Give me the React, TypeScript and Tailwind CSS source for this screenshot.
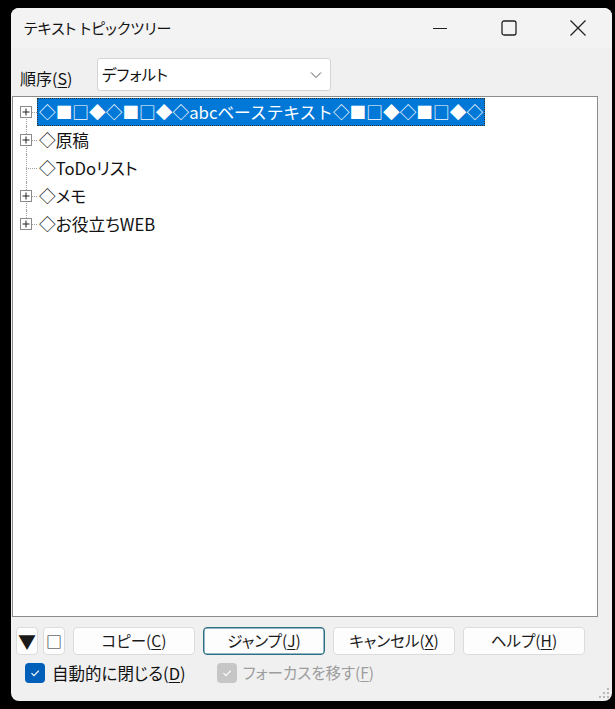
import React from "react";

const font = "font-['Noto_Sans_CJK_JP','Noto_Sans',sans-serif] [font-feature-settings:'palt']";

type Row = { text: string; box: boolean; selected?: boolean; first?: boolean; last?: boolean };

const rows: Row[] = [
  { text: "◇■□◆◇■□◆◇abcベーステキスト◇■□◆◇■□◆◇", box: true, selected: true, first: true },
  { text: "◇原稿", box: true },
  { text: "◇ToDoリスト", box: false },
  { text: "◇メモ", box: true },
  { text: "◇お役立ちWEB", box: true, last: true },
];

function TreeRow({ r }: { r: Row }) {
  return (
    <div className="flex items-center h-[28.1px]">
      <div className="relative w-[24px] h-full shrink-0">
        <div
          className={`absolute left-[13px] w-0 border-l border-dotted border-[#a0a0a0] ${
            r.first ? "top-1/2 bottom-0" : r.last ? "top-0 h-1/2" : "top-0 bottom-0"
          }`}
        />
        <div className="absolute left-[13px] top-1/2 w-[11px] h-0 border-t border-dotted border-[#a0a0a0]" />
        {r.box && (
          <div className="absolute left-[7px] top-[8px] w-[12px] h-[12px] bg-white border border-[#8a8a8a] flex items-center justify-center">
            <svg width="10" height="10" viewBox="0 0 10 10">
              <path d="M1.5 5h7M5 1.5v7" stroke="#222" strokeWidth="1" />
            </svg>
          </div>
        )}
      </div>
      <div
        className={`h-full flex items-center px-[2px] text-[16.7px] leading-none whitespace-nowrap ${
          r.selected
            ? "[font-feature-settings:normal] bg-[#0078d7] text-white outline outline-1 outline-dotted outline-[#333] -outline-offset-1"
            : "text-[#111]"
        }`}
      >
        {r.text}
      </div>
    </div>
  );
}

function Btn({ children, focused, className = "" }: { children: React.ReactNode; focused?: boolean; className?: string }) {
  return (
    <div
      className={`h-[28px] flex items-center justify-center rounded-[4px] bg-[#fdfdfd] text-[15.5px] text-[#1a1a1a] border ${
        focused ? "border-[#2d6f86] shadow-[inset_0_0_0_0.5px_#2d6f86]" : "border-[#dcdcdc]"
      } ${className}`}
    >
      {children}
    </div>
  );
}

function Check({ disabled }: { disabled?: boolean }) {
  return (
    <div
      className={`w-[20px] h-[20px] rounded-[4px] flex items-center justify-center ${
        disabled ? "bg-[#c6c6c6]" : "bg-[#005fb8]"
      }`}
    >
      <svg width="14" height="14" viewBox="0 0 14 14">
        <path d="M3.5 7.2l2.5 2.5 4.8-5" fill="none" stroke="white" strokeWidth="1.2" />
      </svg>
    </div>
  );
}

export default function App() {
  return (
    <div className={`w-[615px] h-[709px] bg-black pt-[8px] pl-[11px] ${font}`}>
      <div className="w-[601px] h-[693px] rounded-[8px] bg-[#f0f0f0] flex flex-col overflow-hidden">
        {/* title bar */}
        <div className="h-[40px] shrink-0 flex items-center bg-[#f3f3f3]">
          <div className="pl-[13px] flex-1 text-[15px] text-[#111]">テキスト トピックツリー</div>
          <div className="w-[69px] h-full flex items-center justify-center">
            <svg width="16" height="16" viewBox="0 0 16 16">
              <path d="M1 8.5h14" stroke="#222" strokeWidth="1" />
            </svg>
          </div>
          <div className="w-[69px] h-full flex items-center justify-center">
            <svg width="16" height="16" viewBox="0 0 16 16">
              <rect x="1" y="1" width="14" height="14" rx="2" fill="none" stroke="#222" strokeWidth="1.3" />
            </svg>
          </div>
          <div className="w-[69px] h-full flex items-center justify-center">
            <svg width="18" height="18" viewBox="0 0 18 18">
              <path d="M1.5 1.5l15 15M16.5 1.5l-15 15" stroke="#222" strokeWidth="1.3" />
            </svg>
          </div>
        </div>

        {/* order row */}
        <div className="flex items-center mt-[10px] h-[33px]">
          <div className="pl-[9px] w-[86px] text-[16px] text-[#111] pt-[6px]">
            順序(<span className="underline underline-offset-2">S</span>)
          </div>
          <div className="w-[234px] h-[33px] bg-white border border-[#d4d4d4] rounded-[3px] flex items-center pl-[4px] pr-[8px]">
            <span className="flex-1 text-[15.5px] text-[#111]">デフォルト</span>
            <svg width="12" height="8" viewBox="0 0 12 8">
              <path d="M1 1.5l5 5 5-5" fill="none" stroke="#555" strokeWidth="1" />
            </svg>
          </div>
        </div>

        {/* tree */}
        <div className="ml-[1px] mt-[5px] w-[586px] h-[521px] bg-white border border-[#8c8c8c] pt-[1px]">
          {rows.map((r, i) => (
            <TreeRow key={i} r={r} />
          ))}
        </div>

        {/* buttons */}
        <div className="flex items-center mt-[10px] ml-[5px]">
          <Btn className="w-[22px] text-[18px] mr-[5px]">▼</Btn>
          <Btn className="w-[22px] text-[16px] mr-[8px]">□</Btn>
          <Btn className="w-[122px] mr-[8px]">
            コピー(<span className="underline underline-offset-2">C</span>)
          </Btn>
          <Btn focused className="w-[122px] mr-[8px]">
            ジャンプ(<span className="underline underline-offset-2">J</span>)
          </Btn>
          <Btn className="w-[122px] mr-[8px]">
            キャンセル(<span className="underline underline-offset-2">X</span>)
          </Btn>
          <Btn className="w-[122px]">
            ヘルプ(<span className="underline underline-offset-2">H</span>)
          </Btn>
        </div>

        {/* checkboxes */}
        <div className="flex items-center mt-[8px] ml-[14px] h-[20px]">
          <Check />
          <span className="ml-[7px] text-[16.5px] text-[#111]">
            自動的に閉じる(<span className="underline underline-offset-2">D</span>)
          </span>
          <div className="ml-[31px]">
            <Check disabled />
          </div>
          <span className="ml-[6px] text-[15.5px] text-[#9d9d9d]">
            フォーカスを移す(<span className="underline underline-offset-2">F</span>)
          </span>
        </div>

        {/* grip */}
        <div className="flex-1 flex items-end justify-end pr-[2px] pb-[2px]">
          <svg width="12" height="12" viewBox="0 0 12 12">
            <g fill="#b8b8b8">
              <rect x="9" y="1" width="2" height="2" />
              <rect x="5" y="5" width="2" height="2" />
              <rect x="9" y="5" width="2" height="2" />
              <rect x="1" y="9" width="2" height="2" />
              <rect x="5" y="9" width="2" height="2" />
              <rect x="9" y="9" width="2" height="2" />
            </g>
          </svg>
        </div>
      </div>
    </div>
  );
}
